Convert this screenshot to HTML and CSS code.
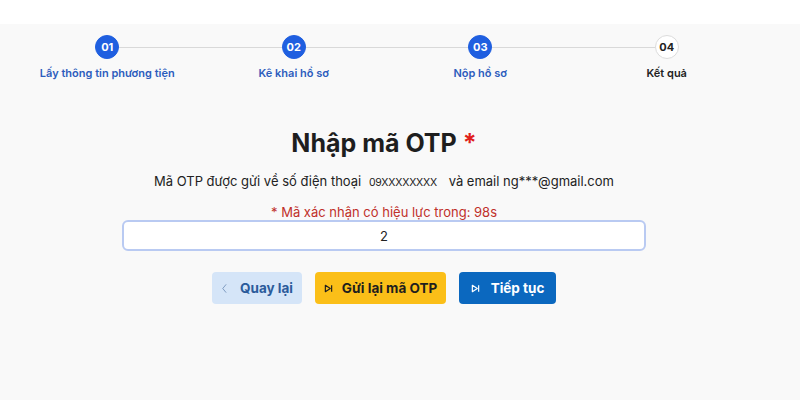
FILE: index.html
```html
<!DOCTYPE html>
<html lang="vi">
<head>
<meta charset="utf-8">
<title>Nhập mã OTP</title>
<link rel="stylesheet" href="styles.css">
</head>
<body>
<div class="topbar"></div>
<main class="page">
  <ol class="stepper">
    <li class="step done"><span class="dot">01</span><span class="label">Lấy thông tin phương tiện</span></li>
    <li class="step done"><span class="dot">02</span><span class="label">Kê khai hồ sơ</span></li>
    <li class="step done"><span class="dot">03</span><span class="label">Nộp hồ sơ</span></li>
    <li class="step"><span class="dot">04</span><span class="label">Kết quả</span></li>
  </ol>

  <section class="otp">
    <h1 class="title">Nhập mã OTP <span class="req">*</span></h1>
    <p class="info">Mã OTP được gửi về số điện thoại <span class="phone">09XXXXXXXX</span> và email ng***@gmail.com</p>
    <p class="timer">* Mã xác nhận có hiệu lực trong: 98s</p>
    <input class="code" type="text" value="2">
    <div class="actions">
      <button class="btn back">
        <svg class="ico" viewBox="0 0 10 14" width="7" height="11"><path d="M7 1.5 L2.5 7 L7 12.5" fill="none" stroke="currentColor" stroke-width="1" stroke-linecap="round" stroke-linejoin="round"/></svg>
        Quay lại</button>
      <button class="btn resend">
        <svg class="ico" viewBox="0 0 10 10" width="9" height="9"><path d="M1.5 1.5 L7 5 L1.5 8.5 Z" fill="none" stroke="currentColor" stroke-width="1.3" stroke-linejoin="round"/><path d="M8.5 1.5 V8.5" stroke="currentColor" stroke-width="1.3"/></svg>
        Gửi lại mã OTP</button>
      <button class="btn next">
        <svg class="ico" viewBox="0 0 10 10" width="9" height="9"><path d="M1.5 1.5 L7 5 L1.5 8.5 Z" fill="none" stroke="currentColor" stroke-width="1.3" stroke-linejoin="round"/><path d="M8.5 1.5 V8.5" stroke="currentColor" stroke-width="1.3"/></svg>
        Tiếp tục</button>
    </div>
  </section>
</main>
</body>
</html>
```

FILE: styles.css
```css
* { box-sizing: border-box; }
html, body { margin: 0; padding: 0; }
body {
  width: 800px;
  height: 400px;
  overflow: hidden;
  background: #f9f9f9;
  font-family: Inter, "Liberation Sans", Arial, sans-serif;
  color: #222;
}
.topbar {
  height: 24px;
  background: #ffffff;
}
.page {
  padding: 11px 0 0 0;
}
.stepper {
  list-style: none;
  margin: 0 0 0 14px;
  padding: 0;
  width: 746px;
  display: grid;
  grid-template-columns: repeat(4, 1fr);
}
.step {
  position: relative;
  display: flex;
  flex-direction: column;
  align-items: center;
}
.step:not(:last-child)::after {
  content: "";
  position: absolute;
  top: 12px;
  left: calc(50% + 12px);
  width: calc(100% - 24px);
  height: 1px;
  background: #d9d9d9;
}
.dot {
  width: 24px;
  height: 24px;
  border-radius: 50%;
  display: flex;
  align-items: center;
  justify-content: center;
  font-size: 11px;
  font-weight: 700;
  background: #fff;
  border: 1px solid #dcdcdc;
  color: #222;
}
.step.done .dot {
  background: #1f5fe0;
  border-color: #1f5fe0;
  color: #fff;
}
.label {
  margin-top: 7px;
  font-size: 11px;
  font-weight: 600;
  color: #222;
  white-space: nowrap;
}
.step.done .label { color: #2d5dbd; }

.otp {
  width: 524px;
  margin: 47px 0 0 122px;
  display: flex;
  flex-direction: column;
  align-items: center;
}
.title {
  margin: 0;
  font-size: 25px;
  line-height: 32px;
  font-weight: 700;
  color: #1e1e1e;
}
.req { color: #e0201a; }
.info {
  margin: 14px 0 0;
  font-size: 13px;
  line-height: 16px;
  color: #222;
}
.phone {
  font-size: 10.5px;
  margin: 0 8px 0 4px;
  letter-spacing: -0.2px;
}
.timer {
  margin: 13px 0 0;
  font-size: 13px;
  line-height: 16px;
  color: #c0302a;
}
.code {
  margin-top: 0;
  width: 524px;
  height: 31px;
  border: 2.5px solid #b9caf2;
  border-radius: 6px;
  background: #fff;
  text-align: center;
  font-family: inherit;
  font-size: 13px;
  color: #222;
  outline: none;
}
.actions {
  margin-top: 21px;
  display: flex;
  gap: 13px;
}
.btn {
  height: 32px;
  border: none;
  border-radius: 4px;
  font-family: inherit;
  font-size: 13.5px;
  font-weight: 700;
  display: flex;
  align-items: center;
  justify-content: center;
  gap: 9px;
  padding: 0;
  white-space: nowrap;
}
.back {
  background: #d5e5f8;
  color: #2b5b9b;
  width: 90px;
  gap: 12px;
}
.back .ico { color: #5a7cab; }
.resend {
  background: #fbbf18;
  color: #1e1e1e;
  width: 131px;
}
.next {
  background: #0b68bf;
  color: #fff;
  width: 97px;
  gap: 11px;
}
.ico { flex: none; }
```
